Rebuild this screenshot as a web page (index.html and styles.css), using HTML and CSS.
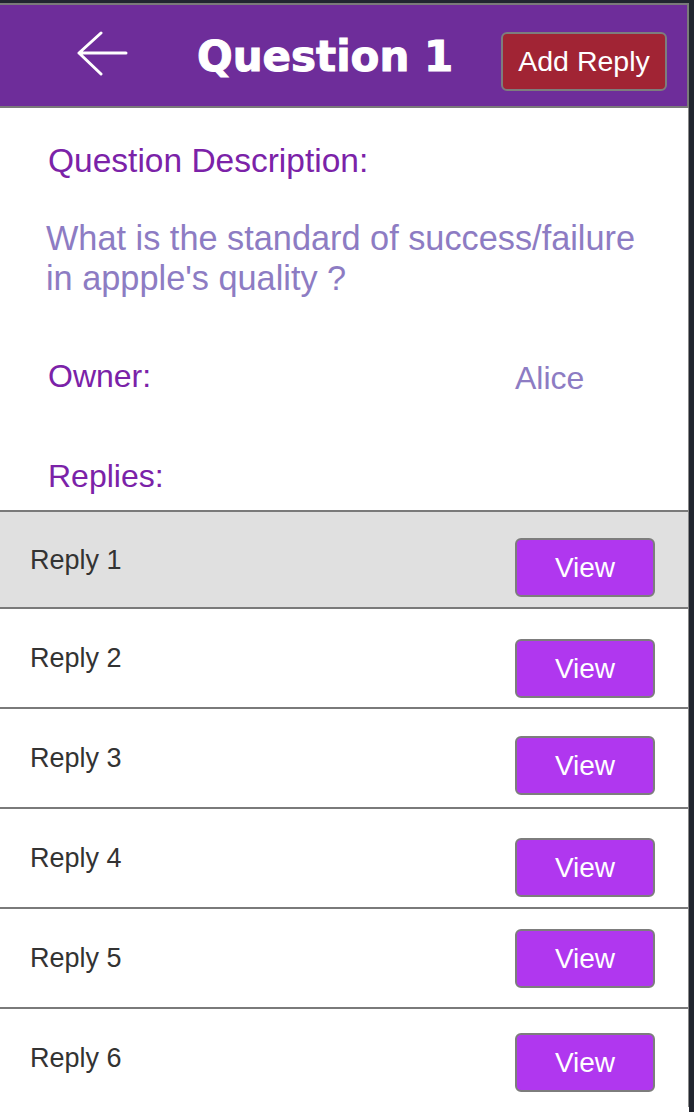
FILE: index.html
```html
<!DOCTYPE html>
<html lang="en">
<head>
<meta charset="utf-8">
<title>Question 1</title>
<link rel="stylesheet" href="styles.css">
</head>
<body>
<div class="app">
  <header class="topbar">
    <svg class="back" width="52" height="46" viewBox="0 0 52 46" aria-hidden="true">
      <path d="M3 22 H50 M25 2 L3 22 L25 43" fill="none" stroke="#ffffff" stroke-width="3" stroke-linecap="round" stroke-linejoin="round"/>
    </svg>
    <h1 class="title">Question 1</h1>
    <button class="add-reply">Add Reply</button>
  </header>
  <main class="content">
    <section class="details">
      <div class="label desc-label">Question Description:</div>
      <p class="desc">What is the standard of success/failure in appple's quality ?</p>
      <div class="owner-row">
        <span class="label owner-label">Owner:</span>
        <span class="owner-name">Alice</span>
      </div>
      <div class="label replies-label">Replies:</div>
    </section>
    <ul class="replies">
      <li class="reply selected"><span class="reply-name">Reply 1</span><button class="view">View</button></li>
      <li class="reply"><span class="reply-name">Reply 2</span><button class="view">View</button></li>
      <li class="reply"><span class="reply-name">Reply 3</span><button class="view">View</button></li>
      <li class="reply"><span class="reply-name">Reply 4</span><button class="view">View</button></li>
      <li class="reply"><span class="reply-name">Reply 5</span><button class="view">View</button></li>
      <li class="reply"><span class="reply-name">Reply 6</span><button class="view">View</button></li>
    </ul>
  </main>
</div>
</body>
</html>
```
FILE: styles.css
```css
html, body {
  margin: 0;
  padding: 0;
  height: 100%;
  overflow: hidden;
}
body {
  background: #21252f;
  font-family: "Liberation Sans", Arial, Helvetica, sans-serif;
}
.app {
  width: 689px;
  margin-top: 3px;
  min-height: 1109px;
  background: #ffffff;
}
.topbar {
  display: flex;
  align-items: flex-start;
  height: 101px;
  padding-left: 76px;
  background: #6e2d9a;
  border-top: 2px solid #7a7a7a;
  border-right: 2px solid #7a7a7a;
  border-bottom: 2px solid #7a7a7a;
}
.back {
  display: block;
  margin-top: 26px;
  flex: 0 0 auto;
}
.title {
  margin: 31px 0 0 69px;
  font-family: "DejaVu Sans", Verdana, sans-serif;
  font-weight: bold;
  font-size: 42px;
  line-height: 42px;
  color: #ffffff;
  -webkit-text-stroke: 1px #ffffff;
  white-space: nowrap;
}
.add-reply {
  margin: 27px 20px 0 auto;
  width: 166px;
  height: 59px;
  padding: 0;
  background: #a12434;
  border: 2px solid #7d7d7d;
  border-radius: 6px;
  color: #ffffff;
  font-family: "Liberation Sans", Arial, sans-serif;
  font-size: 28.5px;
  line-height: 55px;
}
.content {
  border-right: 1px solid #8a8a8a;
}
.details {
  padding: 33px 0 14px 48px;
}
.label {
  font-size: 32px;
  line-height: 40px;
  color: #7b22a8;
}
.desc-label {
  font-size: 33.5px;
}
.desc {
  margin: 37px 0 0 -2px;
  width: 610px;
  font-size: 34.3px;
  line-height: 40px;
  color: #8d7cc3;
}
.owner-row {
  display: flex;
  margin-top: 58px;
}
.owner-label {
  flex: 0 0 467px;
}
.owner-name {
  padding-top: 2px;
  font-size: 32px;
  line-height: 40px;
  color: #8d7cc3;
}
.replies-label {
  margin-top: 58px;
}
.replies {
  list-style: none;
  margin: 0;
  padding: 0;
}
.reply {
  display: flex;
  align-items: flex-start;
  height: 98px;
  padding: 0 33px 0 30px;
  border-top: 2px solid #7a7a7a;
}
.reply.selected {
  height: 95px;
  background: #e0e0e0;
}
.reply-name {
  align-self: center;
  font-size: 27px;
  line-height: 32px;
  color: #333333;
}
.view {
  margin-left: auto;
  width: 140px;
  height: 59px;
  padding: 0;
  background: #b037ef;
  border: 2px solid #7d7d7d;
  border-radius: 6px;
  color: #ffffff;
  font-family: "Liberation Sans", Arial, sans-serif;
  font-size: 28px;
  line-height: 55px;
}
.reply:nth-child(1) .view { margin-top: 26px; }
.reply:nth-child(2) .view { margin-top: 30px; }
.reply:nth-child(3) .view { margin-top: 27px; }
.reply:nth-child(4) .view { margin-top: 29px; }
.reply:nth-child(5) .view { margin-top: 20px; }
.reply:nth-child(6) .view { margin-top: 24px; }
```
